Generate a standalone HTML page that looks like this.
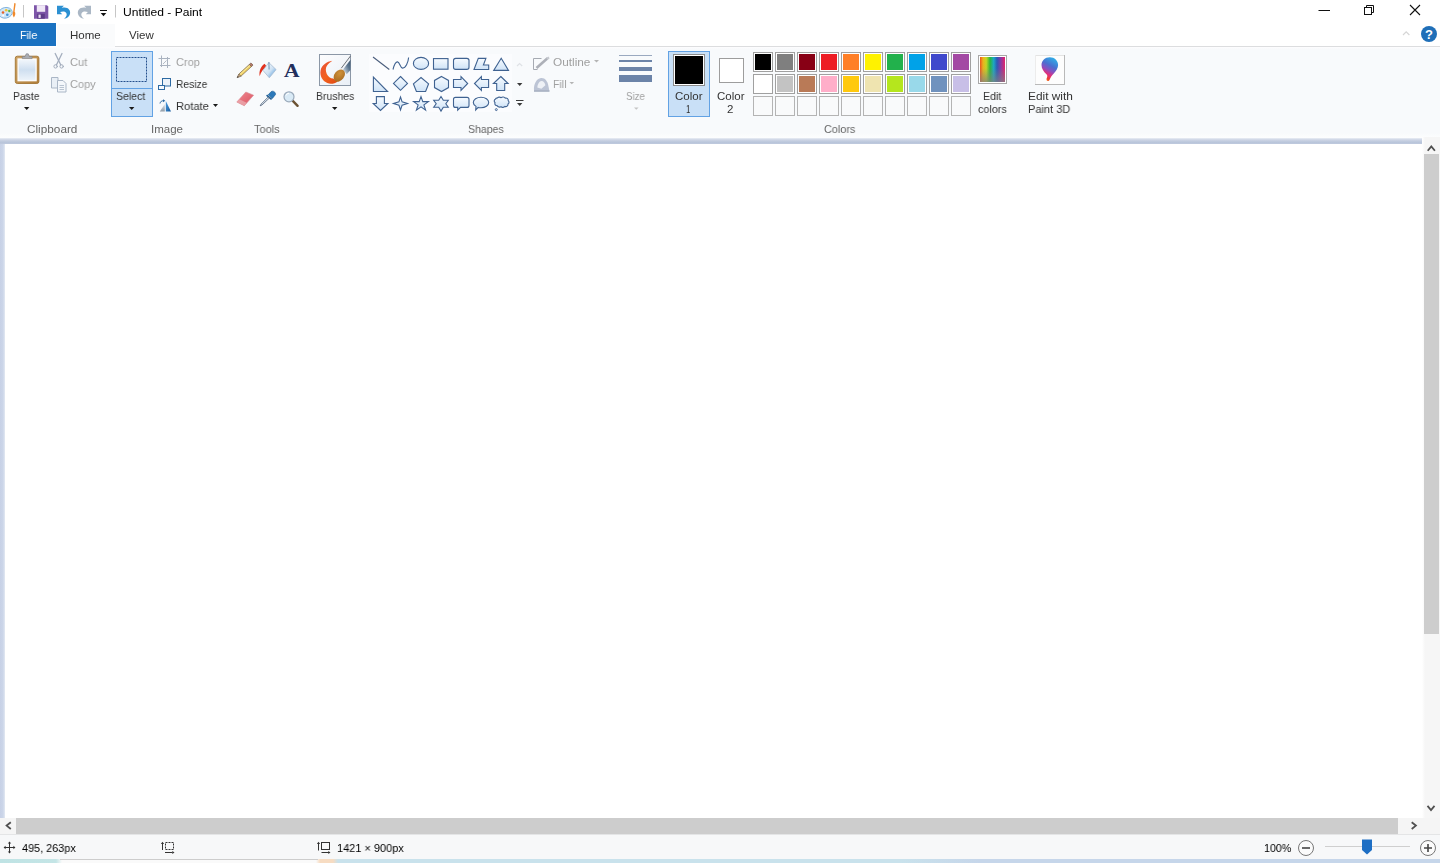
<!DOCTYPE html>
<html lang="en">
<head>
<meta charset="utf-8">
<title>Untitled - Paint</title>
<style>
*{box-sizing:border-box;margin:0;padding:0}
html,body{width:1440px;height:863px;overflow:hidden;background:#fff}
body{position:relative;font-family:"Liberation Sans",sans-serif;font-size:11.5px;color:#333}
.abs{position:absolute}
.t{will-change:transform;position:absolute;white-space:nowrap;line-height:14px;height:14px;transform-origin:0 50%}
.tc{position:absolute;white-space:nowrap;line-height:14px;height:14px;text-align:center;transform-origin:50% 50%}
.dis{color:#a0a0a0}
.lbl{color:#666}
svg{position:absolute;overflow:visible}
/* regions */
#titlebar{left:0;top:0;width:1440px;height:23px;background:#fff}
#tabs{left:0;top:23px;width:1440px;height:24px;background:#fff}
#filetab{left:0;top:23px;width:56px;height:23px;background:#1b72c1}
#hometab{left:57px;top:24px;width:58px;height:23px;background:#fafbfc}
#tabline{left:115px;top:46px;width:1325px;height:1px;background:#dcdddf}
#ribbon{left:0;top:47px;width:1440px;height:91px;background:linear-gradient(#fdfdfe 0,#f8fafc 2px,#f8fafc 86px,#fcfdfe 90px)}
#band{left:0;top:138px;width:1423px;height:6px;background:linear-gradient(#eaeef5 0,#d2d9e8 1.500px,#c2ccdf 3px,#b7c3d9 5px,#c3cde0 6px)}
#work{left:0;top:144px;width:1424px;height:674px;background:linear-gradient(90deg,#c7d1e6 0,#ccd6e9 3px,#dde4f0 4.500px,#fff 5.500px)}
#vscroll{left:1422px;top:137px;width:18px;height:681px;background:linear-gradient(90deg,#fff,#f6f6f6 3px)}
#vthumb{left:1424px;top:154px;width:15px;height:480px;background:#cdcdcd}
#hscroll{left:0;top:818px;width:1440px;height:16px;background:#f5f5f5}
#hthumb{left:16px;top:818px;width:1382px;height:16px;background:#cdcdcd}
#status{left:0;top:834px;width:1440px;height:25px;background:#f7f8f9;border-top:1px solid #e4e5e6}
#bottom{left:0;top:859px;width:1440px;height:4px;background:linear-gradient(90deg,#bfe3e4 0,#c4e5e6 56px,#fafafa 62px,#fafafa 316px,#f7dcc2 320px,#f7dcc2 333px,#c9e2ec 338px,#c9e2ec 900px,#c6d6ea 980px,#c6d6ea 1440px)}
#bottomline{left:60px;top:859px;width:258px;height:1px;background:#cdcdcd}
.selbtn{background:#c9e0f7;border:1px solid #62a2e4}
</style>
</head>
<body>
<div class="abs" id="titlebar"></div>
<div class="abs" id="tabs"></div>
<div class="abs" id="filetab"></div>
<div class="abs" id="hometab"></div>
<div class="abs" id="tabline"></div>
<div class="abs" id="ribbon"></div>
<div class="abs" id="band"></div>
<div class="abs" id="work"></div>
<div class="abs" id="vscroll"></div>
<div class="abs" id="vthumb"></div>
<div class="abs" id="hscroll"></div>
<div class="abs" id="hthumb"></div>
<div class="abs" id="status"></div>
<div class="abs" id="bottom"></div>
<div class="abs" id="bottomline"></div>
<svg width="1440" height="48" viewBox="0 0 1440 48" style="left:0;top:0">
<!-- app icon (partially clipped at the left edge) -->
<ellipse cx="5.500" cy="12.800" rx="6.800" ry="5.300" fill="#cfe6f7" stroke="#7fb2dc" stroke-width=".9" transform="rotate(-12 5.500 12.800)"/>
<circle cx="3" cy="12.500" r="1.300" fill="#e8622a"/><circle cx="6.200" cy="10.300" r="1.300" fill="#f2c230"/><circle cx="9.300" cy="11" r="1.200" fill="#58b848"/><circle cx="7.300" cy="14.800" r="1.300" fill="#3f8fd8"/><circle cx="3.200" cy="15.600" r="1" fill="#fff"/>
<path d="M14.300 3l1.400.4-1.100 8.200c1.300 1.700.8 3.800-.7 5.900-1.200-1.700-1.900-4-.7-5.900z" fill="#f08a2c"/>
<path d="M23.500 5v12.500" stroke="#c6c6c6" stroke-width="1"/>
<!-- save -->
<path d="M34 5.200h13l1.300 1.300v12.200h-14.300z" fill="#7d55a8"/>
<rect x="36.800" y="5.200" width="8.400" height="6.600" fill="#efe6f6"/>
<rect x="37.200" y="13.800" width="7.600" height="4.900" fill="#5e3c88"/><rect x="38.500" y="14.600" width="2.200" height="3.300" fill="#e8dcf2"/>
<!-- undo -->
<path d="M57 5.800l6.800 0-2.100 2.100c5.300-1.700 9.300 1.600 8.300 6-.6 2.700-3 4.500-6 4.800 2.300-1.500 3.300-3.700 2.400-5.500-.9-1.700-3.300-2.300-6.300-1.100l2.100 2.200-5.200 0z" fill="#2b90d2"/>
<!-- redo -->
<path d="M91 5.800l-6.800 0 2.100 2.100c-5.300-1.700-9.300 1.600-8.300 6 .6 2.700 3 4.500 6 4.800-2.300-1.500-3.300-3.700-2.400-5.500.9-1.700 3.300-2.300 6.300-1.100l-2.100 2.200 5.200 0z" fill="#aab7c5"/>
<!-- qat dropdown -->
<path d="M100 10.500h7" stroke="#111" stroke-width="1"/><path d="M100.700 13h5.600l-2.800 3.200z" fill="#111"/>
<path d="M115.500 5v12.500" stroke="#c6c6c6" stroke-width="1"/>
<!-- window controls -->
<path d="M1318.500 10.500h11.500" stroke="#111" stroke-width="1"/>
<path d="M1366.500 7.500v-2h7v7h-2" fill="none" stroke="#111" stroke-width="1"/>
<rect x="1364.500" y="7.500" width="7" height="7" fill="none" stroke="#111" stroke-width="1"/>
<path d="M1410 5l10 10M1420 5l-10 10" stroke="#111" stroke-width="1.100"/>
<!-- minimize ribbon + help -->
<path d="M1403 35l3.200-3.200 3.200 3.200" fill="none" stroke="#d6d6d6" stroke-width="1.200"/>
<circle cx="1429" cy="34" r="8" fill="#1f6fb8"/>
<text x="1429" y="38.600" text-anchor="middle" font-family="'Liberation Sans',sans-serif" font-weight="700" font-size="13" fill="#fff">?</text>
</svg>

<div class="abs selbtn" style="left:111px;top:51px;width:42px;height:66px"></div>
<div class="abs" style="left:112px;top:88px;width:40px;height:1px;background:#62a2e4"></div>
<div class="abs selbtn" style="left:668px;top:51px;width:42px;height:66px"></div>
<svg width="1440" height="160" viewBox="0 0 1440 160" style="left:0;top:0">
<defs>
<linearGradient id="gpaper" x1="0" y1="0" x2="0" y2="1"><stop offset="0" stop-color="#f4f8fc"/><stop offset=".5" stop-color="#cfdff0"/><stop offset="1" stop-color="#eef4fa"/></linearGradient>
<linearGradient id="gboard" x1="0" y1="0" x2="1" y2="1"><stop offset="0" stop-color="#cda365"/><stop offset="1" stop-color="#b07d38"/></linearGradient>
<linearGradient id="gshape" x1="0" y1="0" x2="0" y2="1"><stop offset="0" stop-color="#f7fbff"/><stop offset="1" stop-color="#cfe3f7"/></linearGradient>
</defs>
<!-- Paste -->
<g id="ic-paste">
<rect x="15.300" y="56.200" width="23.600" height="27.300" rx="2" fill="url(#gboard)" stroke="#a37533" stroke-width=".9"/>
<rect x="18.100" y="59" width="18" height="21.700" fill="url(#gpaper)" stroke="#fdfdfd" stroke-width="1.300"/>
<path d="M22.300 58.600h9.800v-2h-2.700l-1.200-2.800h-2l-1.200 2.800h-2.700z" fill="#a9acb2" stroke="#7d8087" stroke-width=".6"/>
</g>
<path d="M24 107h5.4l-2.7 3z" fill="#1a1a1a"/>
<!-- Cut -->
<g id="ic-cut" fill="none" stroke="#a3adbd" stroke-width="1.3" stroke-linecap="round">
<path d="M55.2 53.5 L60.8 65"/><path d="M62 53.5 L56.4 65"/>
<circle cx="55.6" cy="66.4" r="1.7" stroke-width="1"/><circle cx="61.6" cy="66.4" r="1.7" stroke-width="1"/>
</g>
<!-- Copy -->
<g id="ic-copy" stroke="#aab6c6" stroke-width="1" fill="#e9eff6">
<path d="M51.5 77.5h6.5v10.5h-6.5z"/>
<path d="M57.5 80.5h5.5l3 3v8.5h-8.5z" fill="#f4f7fb"/>
<path d="M59.5 85.500h4.500M59.5 87.500h4.500M59.5 89.500h4.500" stroke-width=".8"/>
</g>
<!-- Select -->
<rect x="116.5" y="57.5" width="30" height="24" fill="none" stroke="#234f8c" stroke-width="1" stroke-dasharray="2 1"/>
<path d="M129 107h5.400l-2.700 3z" fill="#1a1a1a"/>
<path d="M1427.700 150.800l3.600-4.400 3.600 4.400" fill="none" stroke="#505050" stroke-width="1.800"/>
<!-- Crop -->
<g fill="none" stroke="#aab3c0" stroke-width="1">
<path d="M161.500 55.500v11.500M167.500 57v11M158.500 58.500h11.500M160 65.500h10.500"/><path d="M163 64l3.500-3.500" stroke-width=".9"/>
</g>
<!-- Resize -->
<g fill="#eaf2fa" stroke="#2d6aa3" stroke-width="1">
<rect x="162.500" y="78.500" width="8" height="7.500"/>
<rect x="158.500" y="85.500" width="6" height="4" fill="#f5f9fd"/>
</g>
<!-- Rotate -->
<defs><linearGradient id="grot" x1="0" y1="0" x2="0" y2="1"><stop offset="0" stop-color="#dfe6ee"/><stop offset="1" stop-color="#8e9aa6"/></linearGradient>
<linearGradient id="grot2" x1="0" y1="0" x2="1" y2="1"><stop offset="0" stop-color="#4a9be0"/><stop offset="1" stop-color="#185a9c"/></linearGradient></defs>
<path d="M164.800 104v7.500h-5z" fill="url(#grot)"/>
<path d="M165.800 101l5.200 10.500h-5.200z" fill="url(#grot2)"/>
<path d="M160 103.500c.3-2 1.700-2.800 3.600-2.800" fill="none" stroke="#2d6aa3" stroke-width="1"/><path d="M163 99.200l2.300 1.500-2.300 1.500z" fill="#2d6aa3"/>
<path d="M213 104h5l-2.500 3z" fill="#1a1a1a"/>
<!-- Pencil -->
<g>
<path d="M238.800 74.100L249.400 64.400 251.400 66.600 240.800 76.300z" fill="#f2d262" stroke="#857252" stroke-width=".8"/>
<path d="M239.700 74.700L250 65.300" stroke="#fbeeb0" stroke-width=".8"/>
<path d="M249.400 64.400l1.600-1.500 2 2.200-1.600 1.500z" fill="#b37a68" stroke="#7a5a4c" stroke-width=".7"/>
<path d="M238.800 74.100l-1.700 3.600 3.700-1.400z" fill="#d9b68a" stroke="#6e5a48" stroke-width=".7"/>
<path d="M237.100 77.700l.7-1.600 1 .9z" fill="#3b3b3b"/>
</g>
<!-- Fill bucket -->
<defs><linearGradient id="gbuck" x1="0" y1="0" x2="1" y2="1"><stop offset="0" stop-color="#ffffff"/><stop offset=".55" stop-color="#cfe2f4"/><stop offset="1" stop-color="#3e8fd6"/></linearGradient></defs>
<path d="M264.600 63.800c-3.800 2.600-5.800 7.200-4.900 12.400 1.200-4.200 3.400-7.200 6.900-9.800z" fill="#e2321f"/>
<path d="M268.800 62.600l7.300 7-6.800 8.200-6.300-7.400z" fill="url(#gbuck)" stroke="#a9bdd2" stroke-width=".8"/>
<path d="M268.900 62l.2 7.500" stroke="#6f8fb0" stroke-width="1" fill="none"/>
<!-- A -->
<text x="284" y="77" font-family="'Liberation Serif',serif" font-weight="700" font-size="19" fill="#232f5c" textLength="15.500" lengthAdjust="spacingAndGlyphs">A</text>
<!-- Eraser -->
<defs><linearGradient id="geras" x1="0" y1="0" x2="1" y2="1"><stop offset="0" stop-color="#f08a92"/><stop offset="1" stop-color="#d9515f"/></linearGradient></defs>
<path d="M245.800 92l7.800 3.200-9.300 10.500-7.500-3.600z" fill="url(#geras)" stroke="#d78c94" stroke-width=".6"/>
<path d="M239.300 99.300l7.400 3.500-2.400 2.900-7.500-3.600z" fill="#eaa3a8" opacity=".9"/>
<!-- Picker -->
<path d="M271.200 91.600c2-1.400 4.600.8 4.400 2.800l-3.200 4-4.200-3.600z" fill="#2b78b9" stroke="#1d5c94" stroke-width=".6"/>
<path d="M266.600 95.200l5 4.200" stroke="#1d5c94" stroke-width="1.600"/>
<path d="M268.200 97l-7 7-1 1.800 1.900-.9 7.200-6.800z" fill="#e6eef6" stroke="#4c5f78" stroke-width=".8"/>
<!-- Magnifier -->
<path d="M292.800 100.800l4.800 5" stroke="#6b5233" stroke-width="2.400" stroke-linecap="round"/>
<circle cx="289" cy="96.800" r="5" fill="#d9eaf6" stroke="#9aa9ba" stroke-width="1.200"/>
<path d="M286 95.500a3.300 3.300 0 0 1 3-2.300" stroke="#fff" stroke-width="1" fill="none"/>
<!-- Brushes -->
<defs>
<linearGradient id="gbrbox" x1="0" y1="0" x2="1" y2="1"><stop offset="0" stop-color="#fdfdfe"/><stop offset="1" stop-color="#e9eff6"/></linearGradient>
<linearGradient id="gsw" x1="0" y1="0" x2="1" y2="1"><stop offset="0" stop-color="#e8503a"/><stop offset=".5" stop-color="#f2611f"/><stop offset="1" stop-color="#e04a12"/></linearGradient>
<radialGradient id="ghead" cx=".4" cy=".35" r=".7"><stop offset="0" stop-color="#cf923a"/><stop offset="1" stop-color="#a86b22"/></radialGradient>
<linearGradient id="gfer" x1="0" y1="1" x2="1" y2="0"><stop offset="0" stop-color="#e8eef4"/><stop offset=".6" stop-color="#5d7790"/><stop offset="1" stop-color="#3c556e"/></linearGradient>
</defs>
<rect x="319.500" y="54.500" width="31" height="31" fill="url(#gbrbox)" stroke="#8b97a6" stroke-width="1"/>
<path d="M332.300 60.800c-5.600.8-10.600 4.400-11.700 9.800-1 5.200 1.800 10.500 6.700 12.500 3.600 1.400 7.600.4 10.400-1.700l-4.600-3c-2.600 0-5-1.900-6.300-4.500-1.400-2.900-1.300-6 .3-8.300 1.200-1.800 3-3.200 5.200-4.800z" fill="url(#gsw)"/>
<path d="M343 69.600l7.500-9.800v10.200l-3.800 4.200z" fill="url(#gfer)"/>
<path d="M341.300 68.200L350.500 56" stroke="#6c7076" stroke-width="1" fill="none"/>
<ellipse cx="339.300" cy="75.600" rx="4.900" ry="6.800" transform="rotate(38 339.300 75.600)" fill="url(#ghead)"/>
<path d="M332 107h5.400l-2.700 3z" fill="#1a1a1a"/>
<!-- Shapes gallery -->
<rect x="369" y="54" width="143" height="58" fill="#fbfcfe"/>
<g fill="url(#gshape)" stroke="#3f6291" stroke-width="1.100" stroke-linejoin="miter">
<path d="M373 57L389.300 69.500" fill="none" stroke="#4a5d7c"/>
<path d="M393 69.500c1-4 2.500-7.800 4.600-7.600 2.300.3 2.300 6 5 6.200 3 .2 5.600-5.400 6-10.600" fill="none"/>
<ellipse cx="421" cy="63.400" rx="7.600" ry="6"/>
<rect x="433.500" y="58.600" width="14.500" height="10.600"/>
<rect x="453.500" y="58.400" width="15.500" height="11" rx="2.200"/>
<path d="M474 69.500l4.300-11.100h7.600l-2.500 6.600h5.300v4.500z"/>
<path d="M501.200 58.200l7.300 12.200h-14.800z"/>
<path d="M373.400 77.200v14.300h14.200z"/>
<path d="M400.500 76.500l7 6.900-7 6.900-7-6.900z"/>
<path d="M421 77.500l7.600 6.300-3 7.700h-9.200l-3-7.700z"/>
<path d="M441.500 76.500l7 3.900v7.200l-7 3.900-7-3.900v-7.200z"/>
<path d="M453.500 79.500h7.500v-3l6.700 7-6.700 7v-3h-7.500z"/>
<path d="M488.600 79.500h-7.200v-3l-6.900 7 6.900 7v-3h7.200z"/>
<path d="M500.800 76.500l7.300 7h-3.400v7h-8v-7h-3.300z"/>
<path d="M376.400 96.600h8v6.900h3.500l-7.400 7-7.300-7h3.200z"/>
<path d="M400.500 97l1.600 4.900 5.400 1.600-5.400 1.600-1.600 4.900-1.600-4.900-5.400-1.600 5.400-1.600z"/>
<path d="M421 96.600l1.800 5h5.600l-4.500 3.300 1.700 5.300-4.600-3.300-4.600 3.300 1.700-5.300-4.500-3.300h5.600z"/>
<path d="M441 96.500l2.300 3.800h5l-2.500 3.500 2.500 3.500h-5l-2.300 3.800-2.300-3.800h-5l2.500-3.500-2.500-3.500h5z"/>
<path d="M455.500 97.400h11.500a2 2 0 0 1 2 2v6a2 2 0 0 1-2 2h-6.500l-2.800 2.800v-2.800h-2.200a2 2 0 0 1-2-2v-6a2 2 0 0 1 2-2z"/>
<path d="M481 97.200c4.300 0 7.700 2.400 7.700 5.300s-3.400 5.300-7.700 5.300c-1 0-1.900-.1-2.800-.4l-2.500 2.600.3-3.600c-1.700-1-2.700-2.400-2.700-3.900 0-2.900 3.400-5.300 7.700-5.300z"/>
<path d="M497 98.200c1-1.400 3-1.400 4-.5 1.200-1 3.500-.9 4.300.4 1.700-.4 3.300.9 2.900 2.500 1.200 1 1 2.800-.2 3.500.2 1.700-1.500 2.900-3 2.300-1 1.200-3 1.300-4 .3-1.300.8-3.200.3-3.700-1-1.700.1-3-1.500-2.300-3-1.300-1.200-.9-3.200.6-3.700.1-.6.700-1 1.400-.8z"/>
<circle cx="496.300" cy="109.600" r="1" stroke-width=".9"/>
</g>
<!-- gallery scroll buttons -->
<path d="M517 66l2.600-2.500 2.600 2.500" fill="none" stroke="#dfe2e6" stroke-width="1.200"/>
<path d="M517 83h5.400l-2.700 3z" fill="#3a3a3a"/>
<path d="M516 100.500h7.500" stroke="#3a3a3a" stroke-width="1"/>
<path d="M517 103h5.400l-2.700 3z" fill="#3a3a3a"/>
<!-- Outline -->
<path d="M541.500 58.500h-8v11h4" fill="none" stroke="#a6aab2" stroke-width="1"/>
<path d="M536.500 68l11-9.700" stroke="#adb0b8" stroke-width="2.600" stroke-linecap="butt"/>
<path d="M546.800 58.800l2.300-1.300" stroke="#c5c8ce" stroke-width="2.200"/>
<path d="M594 60h5l-2.500 2.500z" fill="#b4b4b4"/>
<!-- Fill -->
<path d="M534 90.500c-.6-6 2.400-11.800 7-12.400 4-.4 6.500 3.400 7.300 7.300l1 5.100z" fill="#bcc4d5"/>
<path d="M537.300 87.500c.3-3.600 2-6.300 4.200-6.500 2-.1 3.300 1.900 3.900 4.200l-4 3.600z" fill="#eef1f6"/>
<path d="M534 91h15.500" stroke="#9aa4b8" stroke-width="1.400"/>
<path d="M569.500 82h4.600l-2.300 2.200z" fill="#b4b4b4"/>
<!-- Size -->
<g fill="#6b83a8">
<rect x="619" y="55" width="33" height="1" fill="#9aa9c0"/>
<rect x="619" y="60" width="33" height="2"/>
<rect x="619" y="67" width="33" height="4"/>
<rect x="619" y="75" width="33" height="7"/>
</g>
<path d="M634 107.500h4.600l-2.300 2.200z" fill="#c4c4c4"/>
<!-- Color 1 / Color 2 swatches -->
<rect x="673.500" y="54.500" width="31" height="31" fill="#fff" stroke="#8c8c8c" stroke-width="1"/>
<rect x="675" y="56" width="28" height="28" fill="#000"/>
<rect x="719.500" y="58.500" width="24" height="24" fill="#fff" stroke="#9d9d9d" stroke-width="1"/>
<!-- palette -->
<rect x="753.5" y="52.5" width="19" height="19" fill="#fff" stroke="#a0a0a0" stroke-width="1"/>
<rect x="755" y="54" width="16" height="16" fill="#000000"/>
<rect x="775.5" y="52.5" width="19" height="19" fill="#fff" stroke="#a0a0a0" stroke-width="1"/>
<rect x="777" y="54" width="16" height="16" fill="#7f7f7f"/>
<rect x="797.5" y="52.5" width="19" height="19" fill="#fff" stroke="#a0a0a0" stroke-width="1"/>
<rect x="799" y="54" width="16" height="16" fill="#880015"/>
<rect x="819.5" y="52.5" width="19" height="19" fill="#fff" stroke="#a0a0a0" stroke-width="1"/>
<rect x="821" y="54" width="16" height="16" fill="#ed1c24"/>
<rect x="841.5" y="52.5" width="19" height="19" fill="#fff" stroke="#a0a0a0" stroke-width="1"/>
<rect x="843" y="54" width="16" height="16" fill="#ff7f27"/>
<rect x="863.5" y="52.5" width="19" height="19" fill="#fff" stroke="#a0a0a0" stroke-width="1"/>
<rect x="865" y="54" width="16" height="16" fill="#fff200"/>
<rect x="885.5" y="52.5" width="19" height="19" fill="#fff" stroke="#a0a0a0" stroke-width="1"/>
<rect x="887" y="54" width="16" height="16" fill="#22b14c"/>
<rect x="907.5" y="52.5" width="19" height="19" fill="#fff" stroke="#a0a0a0" stroke-width="1"/>
<rect x="909" y="54" width="16" height="16" fill="#00a2e8"/>
<rect x="929.5" y="52.5" width="19" height="19" fill="#fff" stroke="#a0a0a0" stroke-width="1"/>
<rect x="931" y="54" width="16" height="16" fill="#3f48cc"/>
<rect x="951.5" y="52.5" width="19" height="19" fill="#fff" stroke="#a0a0a0" stroke-width="1"/>
<rect x="953" y="54" width="16" height="16" fill="#a349a4"/>
<rect x="753.5" y="74.5" width="19" height="19" fill="#fff" stroke="#a0a0a0" stroke-width="1"/>
<rect x="755" y="76" width="16" height="16" fill="#ffffff"/>
<rect x="775.5" y="74.5" width="19" height="19" fill="#fff" stroke="#a0a0a0" stroke-width="1"/>
<rect x="777" y="76" width="16" height="16" fill="#c3c3c3"/>
<rect x="797.5" y="74.5" width="19" height="19" fill="#fff" stroke="#a0a0a0" stroke-width="1"/>
<rect x="799" y="76" width="16" height="16" fill="#b97a57"/>
<rect x="819.5" y="74.5" width="19" height="19" fill="#fff" stroke="#a0a0a0" stroke-width="1"/>
<rect x="821" y="76" width="16" height="16" fill="#ffaec9"/>
<rect x="841.5" y="74.5" width="19" height="19" fill="#fff" stroke="#a0a0a0" stroke-width="1"/>
<rect x="843" y="76" width="16" height="16" fill="#ffc90e"/>
<rect x="863.5" y="74.5" width="19" height="19" fill="#fff" stroke="#a0a0a0" stroke-width="1"/>
<rect x="865" y="76" width="16" height="16" fill="#efe4b0"/>
<rect x="885.5" y="74.5" width="19" height="19" fill="#fff" stroke="#a0a0a0" stroke-width="1"/>
<rect x="887" y="76" width="16" height="16" fill="#b5e61d"/>
<rect x="907.5" y="74.5" width="19" height="19" fill="#fff" stroke="#a0a0a0" stroke-width="1"/>
<rect x="909" y="76" width="16" height="16" fill="#99d9ea"/>
<rect x="929.5" y="74.5" width="19" height="19" fill="#fff" stroke="#a0a0a0" stroke-width="1"/>
<rect x="931" y="76" width="16" height="16" fill="#7092be"/>
<rect x="951.5" y="74.5" width="19" height="19" fill="#fff" stroke="#a0a0a0" stroke-width="1"/>
<rect x="953" y="76" width="16" height="16" fill="#c8bfe7"/>
<rect x="753.5" y="96.5" width="19" height="19" fill="#f9fafb" stroke="#b4b4b4" stroke-width="1"/>
<rect x="775.5" y="96.5" width="19" height="19" fill="#f9fafb" stroke="#b4b4b4" stroke-width="1"/>
<rect x="797.5" y="96.5" width="19" height="19" fill="#f9fafb" stroke="#b4b4b4" stroke-width="1"/>
<rect x="819.5" y="96.5" width="19" height="19" fill="#f9fafb" stroke="#b4b4b4" stroke-width="1"/>
<rect x="841.5" y="96.5" width="19" height="19" fill="#f9fafb" stroke="#b4b4b4" stroke-width="1"/>
<rect x="863.5" y="96.5" width="19" height="19" fill="#f9fafb" stroke="#b4b4b4" stroke-width="1"/>
<rect x="885.5" y="96.5" width="19" height="19" fill="#f9fafb" stroke="#b4b4b4" stroke-width="1"/>
<rect x="907.5" y="96.5" width="19" height="19" fill="#f9fafb" stroke="#b4b4b4" stroke-width="1"/>
<rect x="929.5" y="96.5" width="19" height="19" fill="#f9fafb" stroke="#b4b4b4" stroke-width="1"/>
<rect x="951.5" y="96.5" width="19" height="19" fill="#f9fafb" stroke="#b4b4b4" stroke-width="1"/>
<!-- Edit colors -->
<defs>
<linearGradient id="grain" x1="0" y1="0" x2="1" y2="0"><stop offset="0" stop-color="#f0501a"/><stop offset=".12" stop-color="#f0b418"/><stop offset=".25" stop-color="#c8d820"/><stop offset=".4" stop-color="#28b838"/><stop offset=".55" stop-color="#18a8c8"/><stop offset=".68" stop-color="#2858b8"/><stop offset=".82" stop-color="#8038a8"/><stop offset="1" stop-color="#e8206a"/></linearGradient>
<linearGradient id="ggray" x1="0" y1="0" x2="0" y2="1"><stop offset="0" stop-color="#808080" stop-opacity="0"/><stop offset=".45" stop-color="#808080" stop-opacity=".08"/><stop offset="1" stop-color="#808080" stop-opacity=".75"/></linearGradient>
<linearGradient id="gdrop" x1=".7" y1="0" x2=".3" y2="1"><stop offset="0" stop-color="#2fb0e8"/><stop offset=".35" stop-color="#4a6fd0"/><stop offset=".55" stop-color="#8a4fc0"/><stop offset=".72" stop-color="#e02f7c"/><stop offset=".9" stop-color="#f0402a"/><stop offset="1" stop-color="#f58a20"/></linearGradient>
</defs>
<rect x="978.500" y="55.500" width="28" height="28" fill="#fff" stroke="#a8a8a8" stroke-width="1"/>
<rect x="980" y="57" width="25" height="25" fill="url(#grain)"/>
<rect x="980" y="57" width="25" height="25" fill="url(#ggray)"/>
<!-- Paint 3D -->
<rect x="1035" y="55" width="29.500" height="29" fill="#fdfdfd"/>
<path d="M1035 55.500h29.500" stroke="#e3e3e3" stroke-width="1"/><path d="M1035.500 55v29" stroke="#ececec" stroke-width="1"/>
<path d="M1064.500 55v29.500M1035 84.500h30" stroke="#b9b9b9" stroke-width="1" fill="none"/>
<path d="M1049.800 57.300c4.800 0 8.300 3.400 8.300 7.800 0 3.300-2 6-4.300 8.400-2 2.200-3.400 4-4.200 6.300-.4 1.200-1.600 1.700-2.400 1-1-.8-.8-2.200-.2-3.400.6-1.300.3-2.400-.8-3.400-2.400-2.200-4.700-5-4.700-8.900 0-4.400 3.500-7.800 8.300-7.800z" fill="url(#gdrop)"/>



</svg>

<svg width="1440" height="63" viewBox="0 800 1440 63" style="left:0;top:800px">
<!-- scrollbar arrows -->
<path d="M10.800 822.200l-4.200 3.400 4.200 3.400" fill="none" stroke="#505050" stroke-width="1.800"/>
<path d="M1411.700 822.200l4.200 3.400-4.200 3.400" fill="none" stroke="#505050" stroke-width="1.800"/>
<path d="M1427.500 805.800l3.500 4.200 3.500-4.200" fill="none" stroke="#505050" stroke-width="1.800"/>
<!-- cursor pos icon -->
<g stroke="#333" stroke-width="1" fill="none">
<path d="M9.500 842.500v10M4.500 847.500h10"/>
</g>
<path d="M9.500 841.600l1.700 2h-3.400zM9.500 853.400l1.700-2h-3.400zM3.600 847.500l2-1.700v3.400zM15.400 847.500l-2-1.700v3.400z" fill="#333"/>
<!-- selection size icon -->
<g stroke="#333" stroke-width="1" fill="none">
<rect x="165.500" y="842.500" width="8" height="7" stroke-dasharray="2 1"/>
<path d="M162.500 843.500v6.500M165 852.500h7.500"/>
</g>
<path d="M162.500 841.700l1.600 2.200h-3.200zM174.500 852.500l-2.200-1.600v3.200z" fill="#333"/>
<!-- canvas size icon -->
<g stroke="#333" stroke-width="1" fill="none">
<rect x="321.500" y="842.500" width="8" height="7"/>
<path d="M318.500 843.500v7M321.500 852.500h7.500"/>
</g>
<path d="M318.500 841.700l1.600 2.200h-3.200zM330.500 852.500l-2.200-1.600v3.200z" fill="#333"/>
<!-- zoom controls -->
<circle cx="1306" cy="848" r="7.500" fill="#fbfbfb" stroke="#777" stroke-width="1"/>
<path d="M1302 848h8" stroke="#444" stroke-width="1.600"/>
<circle cx="1428" cy="848" r="7.500" fill="#fbfbfb" stroke="#777" stroke-width="1"/>
<path d="M1424 848h8M1428 844v8" stroke="#444" stroke-width="1.600"/>
<path d="M1325 846.500h85" stroke="#cfcfcf" stroke-width="1"/>
<path d="M1362 839.500h10v10.500l-5 4.500-5-4.500z" fill="#1e6fc4"/>
</svg>

<span class="t " style="left:123.30px;top:4.8px;transform:scaleX(1.0495);color:#000">Untitled - Paint</span>
<span class="t " style="left:19.60px;top:28.0px;transform:scaleX(0.9319);color:#fff">File</span>
<span class="t " style="left:70.00px;top:28.0px;transform:scaleX(0.9907);color:#333">Home</span>
<span class="t " style="left:129.00px;top:28.0px;transform:scaleX(0.9837);color:#333">View</span>
<span class="t " style="left:13.30px;top:89.0px;transform:scaleX(0.9031);">Paste</span>
<span class="t dis" style="left:70.00px;top:55.0px;transform:scaleX(0.9625);">Cut</span>
<span class="t dis" style="left:70.00px;top:77.0px;transform:scaleX(0.9595);">Copy</span>
<span class="t " style="left:116.00px;top:89.0px;transform:scaleX(0.9156);">Select</span>
<span class="t dis" style="left:175.50px;top:55.0px;transform:scaleX(0.9580);">Crop</span>
<span class="t " style="left:175.50px;top:77.0px;transform:scaleX(0.8919);">Resize</span>
<span class="t " style="left:175.50px;top:99.0px;transform:scaleX(0.9705);">Rotate</span>
<span class="t lbl" style="left:27.00px;top:122.0px;transform:scaleX(1.0240);">Clipboard</span>
<span class="t lbl" style="left:150.52px;top:122.0px;transform:scaleX(0.9847);">Image</span>
<span class="t lbl" style="left:254.00px;top:122.0px;transform:scaleX(0.9595);">Tools</span>
<span class="t " style="left:315.50px;top:89.0px;transform:scaleX(0.9072);">Brushes</span>
<span class="t lbl" style="left:468.00px;top:122.0px;transform:scaleX(0.9171);">Shapes</span>
<span class="t dis" style="left:553.00px;top:55.0px;transform:scaleX(1.0266);">Outline</span>
<span class="t dis" style="left:553.00px;top:77.0px;transform:scaleX(0.9197);">Fill</span>
<span class="t dis" style="left:625.50px;top:89.0px;transform:scaleX(0.8419);">Size</span>
<span class="t " style="left:674.50px;top:89.0px;transform:scaleX(0.9945);">Color</span>
<span class="t " style="left:686.00px;top:102.0px;transform:scaleX(0.6667);">1</span>
<span class="t " style="left:716.50px;top:89.0px;transform:scaleX(0.9945);">Color</span>
<span class="t " style="left:727.00px;top:102.0px;transform:scaleX(1.0000);">2</span>
<span class="t lbl" style="left:824.40px;top:122.0px;transform:scaleX(0.9438);">Colors</span>
<span class="t " style="left:982.50px;top:89.0px;transform:scaleX(0.9214);">Edit</span>
<span class="t " style="left:978.00px;top:102.0px;transform:scaleX(0.9377);">colors</span>
<span class="t " style="left:1027.50px;top:89.0px;transform:scaleX(1.0333);">Edit with</span>
<span class="t " style="left:1028.00px;top:102.0px;transform:scaleX(0.9588);">Paint 3D</span>
<span class="t " style="left:22.00px;top:841.0px;transform:scaleX(0.9447);color:#000">495, 263px</span>
<span class="t " style="left:337.00px;top:841.0px;transform:scaleX(0.9534);color:#000">1421 × 900px</span>
<span class="t " style="left:1264.00px;top:841.0px;transform:scaleX(0.9251);color:#000">100%</span>
</body>
</html>
